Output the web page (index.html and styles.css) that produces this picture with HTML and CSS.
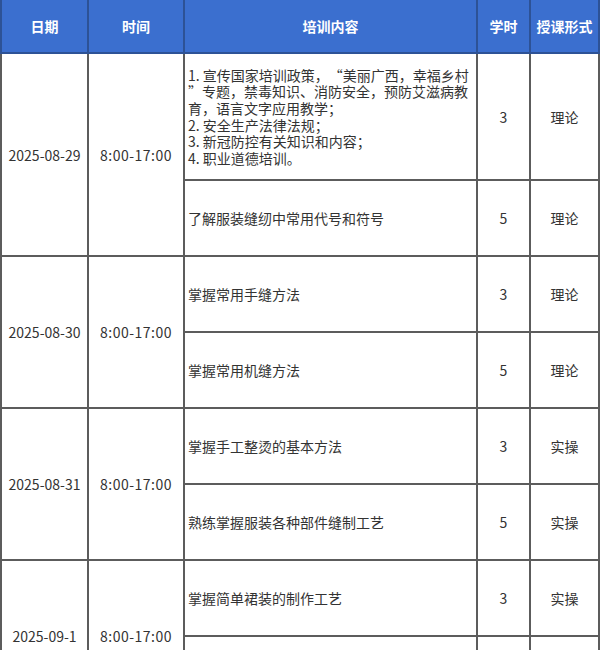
FILE: index.html
```html
<!DOCTYPE html>
<html lang="zh">
<head>
<meta charset="utf-8">
<link rel="stylesheet" href="styles.css">
</head>
<body>
<table class="schedule">
  <colgroup>
    <col class="c-date">
    <col class="c-time">
    <col class="c-content">
    <col class="c-hours">
    <col class="c-mode">
  </colgroup>
  <thead>
    <tr class="head-row">
      <th>日期</th>
      <th>时间</th>
      <th>培训内容</th>
      <th>学时</th>
      <th>授课形式</th>
    </tr>
  </thead>
  <tbody>
    <tr class="row-tall">
      <td rowspan="2" class="center">2025-08-29</td>
      <td rowspan="2" class="center time">8:00-17:00</td>
      <td class="content multi">1. 宣传国家培训政策，<span class="fw fw-open">“</span>美丽广西，幸福乡村<br><span class="fw fw-close">”</span>专题，禁毒知识、消防安全，预防艾滋病教<br>育，语言文字应用教学；<br>2. 安全生产法律法规；<br>3. 新冠防控有关知识和内容；<br>4. 职业道德培训。</td>
      <td class="center">3</td>
      <td class="center">理论</td>
    </tr>
    <tr class="row">
      <td class="content">了解服装缝纫中常用代号和符号</td>
      <td class="center">5</td>
      <td class="center">理论</td>
    </tr>
    <tr class="row">
      <td rowspan="2" class="center">2025-08-30</td>
      <td rowspan="2" class="center time">8:00-17:00</td>
      <td class="content">掌握常用手缝方法</td>
      <td class="center">3</td>
      <td class="center">理论</td>
    </tr>
    <tr class="row">
      <td class="content">掌握常用机缝方法</td>
      <td class="center">5</td>
      <td class="center">理论</td>
    </tr>
    <tr class="row">
      <td rowspan="2" class="center">2025-08-31</td>
      <td rowspan="2" class="center time">8:00-17:00</td>
      <td class="content">掌握手工整烫的基本方法</td>
      <td class="center">3</td>
      <td class="center">实操</td>
    </tr>
    <tr class="row">
      <td class="content">熟练掌握服装各种部件缝制工艺</td>
      <td class="center">5</td>
      <td class="center">实操</td>
    </tr>
    <tr class="row">
      <td rowspan="2" class="center">2025-09-1</td>
      <td rowspan="2" class="center time">8:00-17:00</td>
      <td class="content">掌握简单裙装的制作工艺</td>
      <td class="center">3</td>
      <td class="center">实操</td>
    </tr>
    <tr class="row">
      <td class="content">掌握简单裤装的制作工艺</td>
      <td class="center">5</td>
      <td class="center">实操</td>
    </tr>
  </tbody>
</table>
</body>
</html>
```

FILE: styles.css
```css
html, body {
  margin: 0;
  padding: 0;
  background: #ffffff;
}

body {
  font-family: "Noto Sans CJK SC", "Noto Sans", sans-serif;
  font-size: 14px;
  color: #333333;
}

.schedule {
  border-collapse: collapse;
  table-layout: fixed;
  width: 598px;
}

.c-date { width: 87px; }
.c-time { width: 96px; }
.c-content { width: 293px; }
.c-hours { width: 53px; }
.c-mode { width: 69px; }

.schedule th,
.schedule td {
  border: 2px solid #5c5c5c;
  padding: 0 3px;
  vertical-align: middle;
}

.head-row {
  height: 53px;
}

.head-row th {
  background: #3b6fcf;
  color: #ffffff;
  font-weight: bold;
  font-size: 14px;
  text-align: center;
  border-color: #2d5296;
  border-top: none;
}

.row-tall {
  height: 127px;
}

.row {
  height: 76px;
}

.center {
  text-align: center;
}

.time {
  letter-spacing: 0.5px;
}

.content {
  text-align: left;
}

.multi {
  line-height: 16.6px;
  white-space: nowrap;
}

.fw {
  display: inline-block;
  width: 14px;
}

.fw-open {
  text-align: right;
}

.fw-close {
  text-align: left;
}
```
